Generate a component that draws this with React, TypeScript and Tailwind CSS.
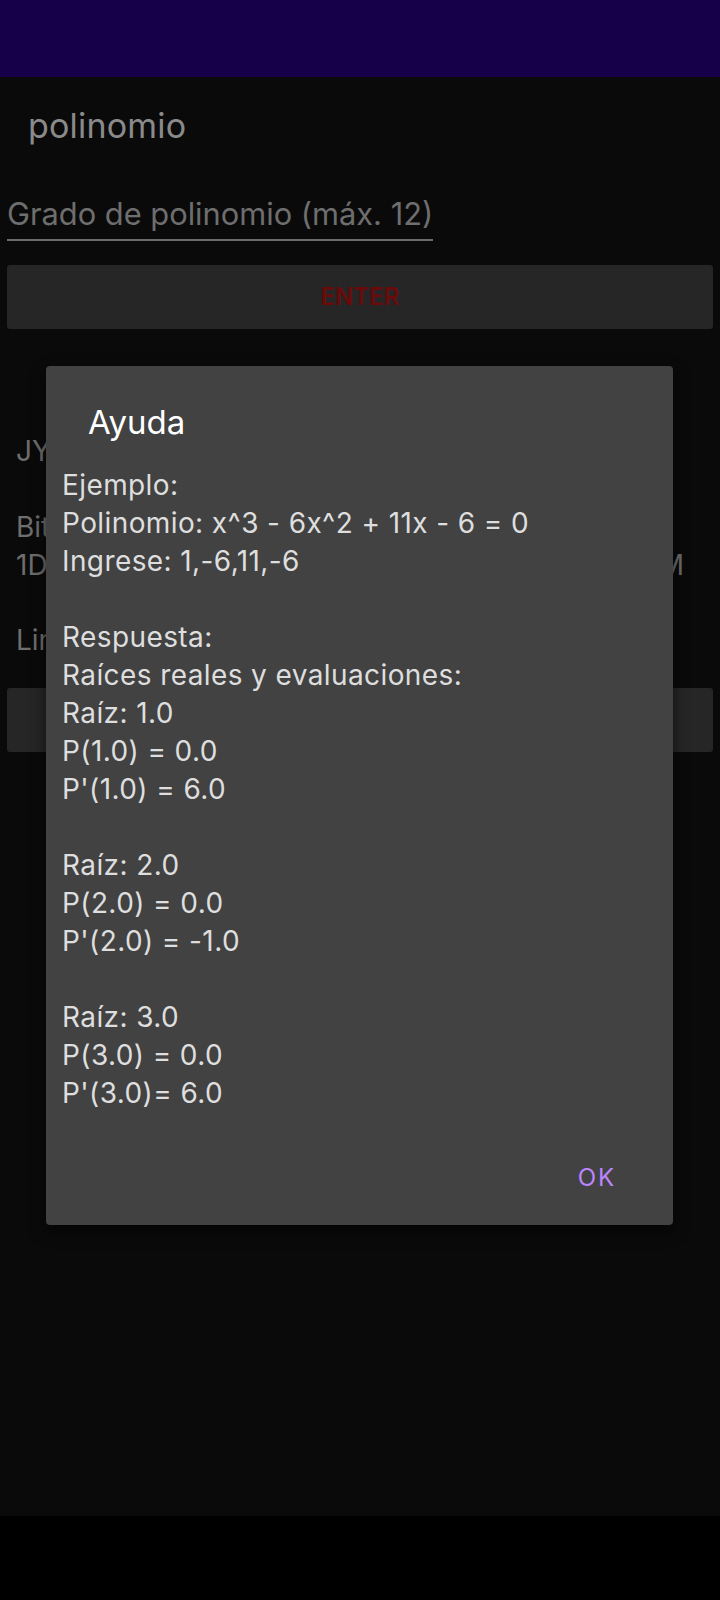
import React from "react";

const lines = [
  "Ejemplo:",
  "Polinomio: x^3 - 6x^2 + 11x - 6 = 0",
  "Ingrese: 1,-6,11,-6",
  "",
  "Respuesta:",
  "Raíces reales y evaluaciones:",
  "Raíz: 1.0",
  "P(1.0) = 0.0",
  "P'(1.0) = 6.0",
  "",
  "Raíz: 2.0",
  "P(2.0) = 0.0",
  "P'(2.0) = -1.0",
  "",
  "Raíz: 3.0",
  "P(3.0) = 0.0",
  "P'(3.0)= 6.0",
];

export default function App() {
  return (
    <div
      className="relative flex h-[1600px] w-[720px] flex-col overflow-hidden bg-black"
      style={{ fontFamily: "Inter, 'Noto Sans', sans-serif" }}
    >
      <div className="h-[77px] shrink-0 bg-[#16004a]" />
      <main className="flex h-[1439px] shrink-0 flex-col bg-[#0a0a0a]">
        <div className="pl-[28px] pt-[29px] text-[34px] leading-[40px] tracking-[0.2px] text-[#8a8a8a]">polinomio</div>
        <div className="ml-[7px] mt-[49px] w-[426px] border-b-[2px] border-[#6a6a6a] pb-[6px] text-[30.8px] leading-[38px] text-[#6e6e6e] whitespace-nowrap">
          Grado de polinomio (máx. 12)
        </div>
        <div className="mx-[7px] mt-[24px] flex h-[64px] items-center justify-center rounded-[3px] bg-[#262626] text-[24px] font-semibold text-[#6b0a0a]">
          ENTER
        </div>
        <div className="mt-[103px] pl-[16px] text-[28px] leading-[38px] text-[#6e6e6e]">
          <div className="w-[30px] overflow-hidden whitespace-nowrap">JY</div>
          <div className="mt-[38px] w-[30px] overflow-hidden whitespace-nowrap">Bit</div>
          <div className="flex justify-between">
            <span className="w-[30px] overflow-hidden whitespace-nowrap">1D</span>
            <span className="pr-[36px]">M</span>
          </div>
          <div className="mt-[37px] w-[30px] overflow-hidden whitespace-nowrap">Lim</div>
        </div>
        <div className="mx-[7px] mt-[29px] h-[64px] rounded-[3px] bg-[#262626]" />
      </main>
      <div className="flex-1 bg-black" />

      <div className="absolute left-[46px] top-[366px] flex h-[859px] w-[627px] flex-col rounded-[4px] bg-[#424242] shadow-[0_6px_16px_rgba(0,0,0,0.6)]">
        <div className="pl-[42px] pt-[36px] text-[33px] leading-[40px] text-white">Ayuda</div>
        <div className="mt-[24px] pl-[16px] text-[28px] leading-[38px] tracking-[0.4px] text-[#dedede]">
          {lines.map((l, i) => (
            <div key={i} className="h-[38px] whitespace-pre">
              {l}
            </div>
          ))}
        </div>
        <div className="mt-auto flex justify-end pb-[32px] pr-[57px]">
          <span className="text-[24px] leading-[30px] tracking-[0.08em] text-[#bb86fc]">OK</span>
        </div>
      </div>
    </div>
  );
}
